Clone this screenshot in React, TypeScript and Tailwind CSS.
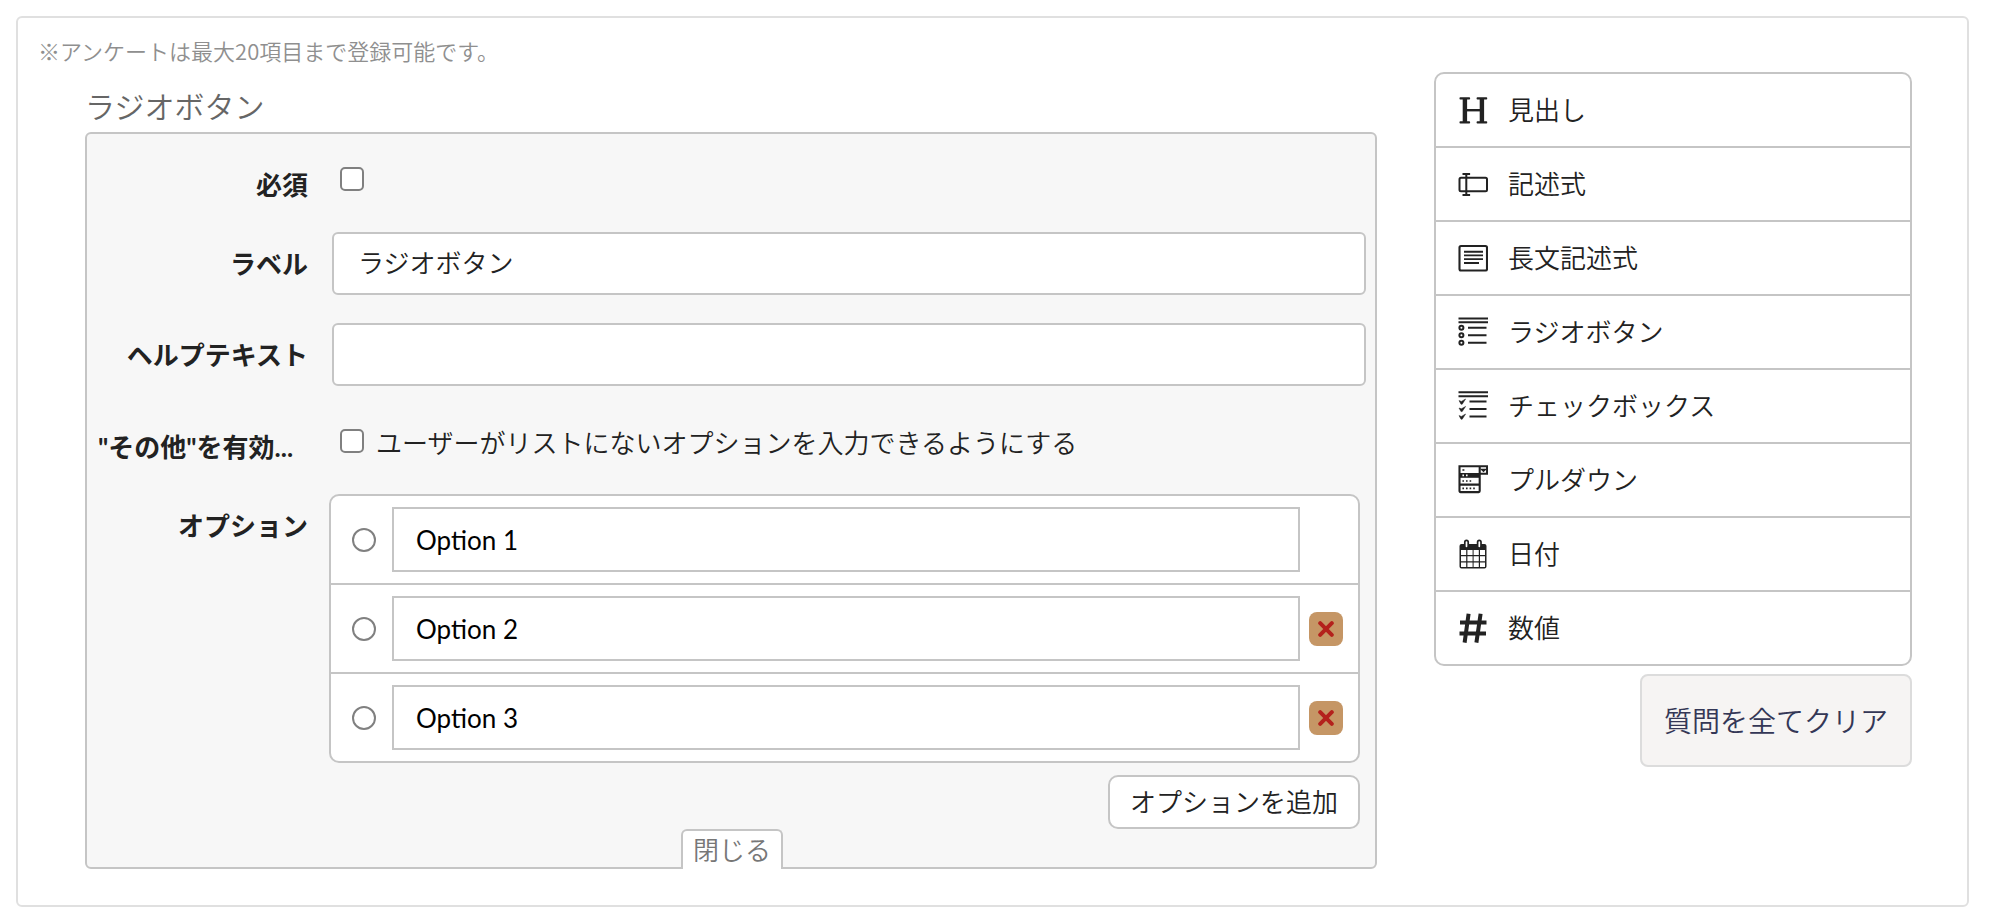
import { useState } from 'react';
import type { ReactNode } from 'react';

const icons: Record<string, ReactNode> = {
    header: (
        <g fill="currentColor">
            <rect x="4.7" y="3" width="4.4" height="25" />
            <rect x="21.7" y="3" width="4.4" height="25" />
            <rect x="9" y="14" width="13" height="2.4" />
            <rect x="1.5" y="2.3" width="10.6" height="2.2" rx="0.8" />
            <rect x="18.6" y="2.3" width="10.6" height="2.2" rx="0.8" />
            <rect x="1.5" y="26.3" width="10.6" height="2.2" rx="0.8" />
            <rect x="18.6" y="26.3" width="10.6" height="2.2" rx="0.8" />
        </g>
    ),
    text: (
        <g fill="none" stroke="currentColor" strokeWidth="2">
            <rect x="1.5" y="8.8" width="27.5" height="13.4" rx="1.5" />
            <path d="M8.3 5v21M4.5 5h7.6M4.5 26h7.6" />
        </g>
    ),
    textarea: (
        <g fill="none" stroke="currentColor">
            <rect x="1.5" y="3" width="27.5" height="24.5" rx="1.5" strokeWidth="2.1" />
            <path d="M6 8.7h19M6 12.4h19M6 16.1h19M6 20h15" strokeWidth="1.9" />
        </g>
    ),
    radio: (
        <g fill="none" stroke="currentColor" strokeWidth="2">
            <path d="M0.5 1.4h29.5M0.5 5.3h29.5M10 10.7h18.5M10 18.3h18.5M10 25.7h18.5" />
            <circle cx="3.4" cy="10.7" r="2" />
            <circle cx="3.4" cy="18.3" r="2" />
            <circle cx="3.4" cy="25.7" r="2" />
        </g>
    ),
    checkbox: (
        <g>
            <path d="M0.5 1.2h29.5M0.5 5.2h29.5M11.5 10.6h17M11.5 18h17M11.5 25.4h17" fill="none" stroke="currentColor" strokeWidth="2" />
            <path d="M1 9.6l2.4 0.8L7.6 8 4.2 13.2H3zM1 17l2.4 0.8L7.6 15.4 4.2 20.6H3zM1 24.6l2.4 0.8L7.6 23 4.2 28.2H3z" fill="currentColor" stroke="currentColor" strokeWidth="0.5" />
        </g>
    ),
    select: (
        <g fill="none" stroke="currentColor" strokeWidth="2.1">
            <path d="M1.5 1.3h27.6v7.4h-7.4v17.4a1 1 0 0 1-1 1H2.5a1 1 0 0 1-1-1zM21.7 1.3v7.4M1.5 19.6h20" />
            <path d="M1.5 8h20v4.8h-20z" fill="currentColor" stroke="none" />
            <path d="M4.4 5h2M24 4.6h3l-1.5 1.4zM4.4 16h1.6M8 16h1.6M11.6 16h1.6M4.4 23.3h1.6M8 23.3h1.6M11.6 23.3h1.6M15.2 23.3h1.6" strokeWidth="1.7" />
            <path d="M4.4 10.4h1.6M8 10.4h1.6" stroke="#fff" strokeWidth="1.6" />
        </g>
    ),
    date: (
        <g>
            <path d="M3.5 5h23a2 2 0 0 1 2 2v20.5a2 2 0 0 1-2 2h-23a2 2 0 0 1-2-2V7a2 2 0 0 1 2-2z" fill="currentColor" />
            <path d="M3 11h5.2v5H3zM9.4 11h5.2v5H9.4zM15.6 11h5.2v5h-5.2zM22 11h5v5h-5zM3 17.2h5.2v5H3zM9.4 17.2h5.2v5H9.4zM15.6 17.2h5.2v5h-5.2zM22 17.2h5v5h-5zM3 23.4h5.2v4.6H3zM9.4 23.4h5.2v4.6H9.4zM15.6 23.4h5.2v4.6h-5.2zM22 23.4h5v4.6h-5z" fill="#fff" />
            <rect x="6.8" y="1.4" width="3.4" height="7.6" rx="1.7" fill="#fff" stroke="currentColor" strokeWidth="1.7" />
            <rect x="19.6" y="1.4" width="3.4" height="7.6" rx="1.7" fill="#fff" stroke="currentColor" strokeWidth="1.7" />
        </g>
    ),
    number: (
        <path d="M10.6 0.8L6.6 29.6M22.6 0.8L18.4 29.6M2 9.6h26.5M1.5 20.4H28" fill="none" stroke="currentColor" strokeWidth="4" />
    ),
};

const controls = [
    { type: 'header', label: '見出し' },
    { type: 'text', label: '記述式' },
    { type: 'textarea', label: '長文記述式' },
    { type: 'radio', label: 'ラジオボタン' },
    { type: 'checkbox', label: 'チェックボックス' },
    { type: 'select', label: 'プルダウン' },
    { type: 'date', label: '日付' },
    { type: 'number', label: '数値' },
];

const labelClass = 'w-[210px] shrink-0 whitespace-nowrap font-bold leading-8';
const boxClass = 'size-6 shrink-0 appearance-none border-2 border-[#808080] bg-white checked:bg-blue-600';
const inputClass = 'h-[63px] w-full min-w-0 rounded-md border-2 border-[#c5c5c5] bg-white px-6 pb-1';

export default function App() {
    const [label, setLabel] = useState('ラジオボタン');
    const [help, setHelp] = useState('');
    const [options, setOptions] = useState(['Option 1', 'Option 2', 'Option 3']);

    const updateOption = (index: number, value: string) => {
        setOptions(options.map((o, i) => (i === index ? value : o)));
    };

    return (
        <div className="bg-white py-4 pr-[30px] pl-4 font-['Lato','Noto_Sans_CJK_JP',sans-serif] text-[26px] leading-8 font-[350] text-[#222]">
            <main className="flex gap-[57px] rounded-md border-2 border-[#e0e0e0] pr-[55px] pb-9 pl-5">
                <div className="min-w-0 flex-1 pt-4">
                    <p className="font-['Noto_Sans_CJK_JP',sans-serif] text-[22px] leading-8 text-[#8f8f8f]">※アンケートは最大20項目まで登録可能です。</p>

                    <section className="ml-[47px]">
                        <h2 className="mt-5 mb-1.5 text-[30px] leading-10 text-[#666]">ラジオボタン</h2>

                        <div className="rounded-md border-2 border-[#c5c5c5] bg-[#f7f7f7] pt-[33px] pr-[9px] pl-[11px]">
                            {/* 必須 */}
                            <div className="mb-[31px] flex items-start gap-6">
                                <label htmlFor="required" className={`${labelClass} mt-0.5 text-right`}>必須</label>
                                <input id="required" type="checkbox" className={`${boxClass} ml-2 rounded-[5px]`} />
                            </div>

                            <div className="mb-7 flex items-center gap-6">
                                <label htmlFor="label" className={`${labelClass} text-right`}>ラベル</label>
                                <input id="label" type="text" value={label} onChange={(e) => setLabel(e.target.value)} className={inputClass} />
                            </div>

                            <div className="mb-[43px] flex items-center gap-6">
                                <label htmlFor="help" className={`${labelClass} text-right`}>ヘルプテキスト</label>
                                <input id="help" type="text" value={help} onChange={(e) => setHelp(e.target.value)} className={inputClass} />
                            </div>

                            {/* その他 */}
                            <div className="mb-[31px] flex items-start gap-6">
                                <label htmlFor="other" className={`${labelClass} mt-0.5`}>"その他"を有効...</label>
                                <div className="ml-2 flex items-start gap-3">
                                    <input id="other" type="checkbox" className={`${boxClass} rounded-[5px]`} />
                                    <label htmlFor="other" className="leading-7">ユーザーがリストにないオプションを入力できるようにする</label>
                                </div>
                            </div>

                            {/* オプション */}
                            <div className="flex items-start gap-[21px]">
                                <span className={`${labelClass} mt-4 text-right`}>オプション</span>
                                <div className="mr-1.5 flex min-w-0 flex-1 flex-col items-end">
                                    <ul className="w-full divide-y-2 divide-[#c5c5c5] rounded-[10px] border-2 border-[#c5c5c5] bg-white">
                                        {options.map((option, i) => (
                                            <li key={i} className="flex h-[87px] items-center pr-[15px] pl-[21px] not-last:h-[89px]">
                                                <input type="radio" name="selected" aria-label={option} className={`${boxClass} rounded-full`} />
                                                <input
                                                    type="text"
                                                    aria-label={`オプション ${i + 1}`}
                                                    value={option}
                                                    onChange={(e) => updateOption(i, e.target.value)}
                                                    className="ml-4 h-[65px] min-w-0 flex-1 border-2 border-[#c5c5c5] bg-white px-[22px] font-normal text-black"
                                                />
                                                <div className="ml-[9px] w-[34px]">
                                                    {i > 0 && (
                                                        <button
                                                            type="button"
                                                            aria-label="削除"
                                                            onClick={() => setOptions(options.filter((_, n) => n !== i))}
                                                            className="flex size-[34px] items-center justify-center rounded-lg bg-[#c59665] text-[#b4211c]"
                                                        >
                                                            <svg viewBox="0 0 16 16" className="size-4" fill="none" stroke="currentColor" strokeWidth="4" strokeLinecap="round">
                                                                <path d="M2.2 2.2l11.6 11.6M13.8 2.2L2.2 13.8" />
                                                            </svg>
                                                        </button>
                                                    )}
                                                </div>
                                            </li>
                                        ))}
                                    </ul>
                                    <button
                                        type="button"
                                        onClick={() => setOptions([...options, `Option ${options.length + 1}`])}
                                        className="mt-3 h-[54px] rounded-[10px] border-2 border-[#c5c5c5] bg-white px-5"
                                    >
                                        オプションを追加
                                    </button>
                                </div>
                            </div>

                            <div className="-mb-0.5 flex justify-center">
                                <button type="button" className="h-10 rounded-t-md border-2 border-b-0 border-[#c5c5c5] bg-white px-2.5 text-[#777]">閉じる</button>
                            </div>
                        </div>
                    </section>
                </div>

                <aside className="flex w-[478px] shrink-0 flex-col items-end pt-[54px]">
                    <ul className="w-full divide-y-2 divide-[#c5c5c5] rounded-[10px] border-2 border-[#c5c5c5]">
                        {controls.map((c) => (
                            <li key={c.type}>
                                <button type="button" className="flex h-[72px] w-full items-center gap-5 px-[22px] text-left">
                                    <svg viewBox="0 0 30 30" className="size-[30px] shrink-0">{icons[c.type]}</svg>
                                    {c.label}
                                </button>
                            </li>
                        ))}
                    </ul>
                    <button type="button" className="mt-2 h-[93px] rounded-lg border-2 border-[#dcdcdc] bg-[#f6f4f3] px-[22px] text-[28px] text-[#343756]">
                        質問を全てクリア
                    </button>
                </aside>
            </main>
        </div>
    );
}
